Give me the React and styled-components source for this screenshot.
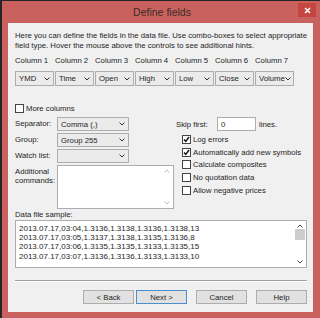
import { createGlobalStyle, styled } from "styled-components";

const GlobalStyle = createGlobalStyle`
  html, body { margin: 0; padding: 0; background: #262626; }
  body {
    width: 320px;
    height: 318px;
    overflow: hidden;
    font-family: "Liberation Sans", Arial, sans-serif;
    color: #1e1e1e;
  }
`;

const Window = styled.div`
  margin: 1px 0 0 2px;
  width: 318px;
  height: 317px;
  box-sizing: border-box;
  background: #c9625e;
  padding-bottom: 6px;
  display: flex;
  flex-direction: column;
`;

const TitleBar = styled.div`
  height: 22px;
  padding: 0 4px 0 6px;
  display: grid;
  grid-template-columns: 1fr auto 1fr;
  align-items: center;
`;

const Title = styled.div`
  grid-column: 2;
  font-size: 10.5px;
  color: #3a2a2a;
`;

const CloseBtn = styled.div`
  grid-column: 3;
  justify-self: end;
  align-self: start;
  margin-top: 2px;
  width: 18px;
  height: 14px;
  background: #c54541;
  display: flex;
  align-items: center;
  justify-content: center;
`;

const Content = styled.div`
  flex: 1;
  margin: 0 7px 0 6px;
  background: #f0f0f0;
  padding: 8px 6px 0 7px;
  display: flex;
  flex-direction: column;
  font-size: 7.75px;
`;

const Intro = styled.div`
  line-height: 10px;
  white-space: nowrap;
`;

const Columns = styled.div`
  margin-top: 5px;
  display: grid;
  grid-template-columns: repeat(7, 39px);
  column-gap: 1px;
  row-gap: 5px;
`;

const Label = styled.div`
  line-height: 10px;
  white-space: nowrap;
`;

const Combo = styled.div`
  box-sizing: border-box;
  width: ${(p) => p.$w || "auto"};
  height: ${(p) => p.$h || "14px"};
  border: 1px solid #adadad;
  background: #ebebeb;
  padding: 0 3px;
  display: flex;
  align-items: center;
  justify-content: space-between;
  white-space: nowrap;
  svg { flex: none; }
`;

const Chevron = () => (
  <svg width="6" height="4" viewBox="0 0 6 4">
    <path d="M0.5 0.5 L3 3 L5.5 0.5" fill="none" stroke="#333" strokeWidth="1" />
  </svg>
);

const CheckRow = styled.div`
  display: flex;
  align-items: center;
  gap: 2px;
  height: ${(p) => p.$h || "10px"};
  white-space: nowrap;
`;

const Box = styled.div`
  box-sizing: border-box;
  width: 9px;
  height: 9px;
  border: 1px solid #444;
  background: #fff;
  display: flex;
  align-items: center;
  justify-content: center;
`;

const Check = ({ checked, label, h }) => (
  <CheckRow $h={h}>
    <Box>
      {checked && (
        <svg width="7" height="7" viewBox="0 0 7 7">
          <path d="M1 3.5 L2.8 5.5 L6 1" fill="none" stroke="#111" strokeWidth="1.4" />
        </svg>
      )}
    </Box>
    {label}
  </CheckRow>
);

const MoreColumns = styled.div`
  margin-top: 17px;
`;

const Form = styled.div`
  margin-top: 4px;
  display: grid;
  grid-template-columns: 161px 1fr;
`;

const LeftForm = styled.div`
  display: grid;
  grid-template-columns: 42px 117px;
  row-gap: 2px;
  align-items: center;
`;

const TwoLineLabel = styled.div`
  align-self: start;
  line-height: 9px;
  margin-top: 2px;
  white-space: nowrap;
`;

const TextArea = styled.div`
  box-sizing: border-box;
  height: 44px;
  border: 1px solid #abadb3;
  background: #fff;
  display: flex;
  justify-content: flex-end;
`;

const ScrollBar = styled.div`
  width: 12px;
  display: flex;
  flex-direction: column;
  align-items: center;
  justify-content: space-between;
  padding: 3px 0;
  box-sizing: border-box;
`;

const Thumb = styled.div`
  width: 10px;
  height: 11px;
  background: #cdcdcd;
  margin-bottom: auto;
  margin-top: 1px;
`;

const Arrow = ({ up, color }) => (
  <svg width="6" height="4" viewBox="0 0 6 4">
    <path
      d={up ? "M0.5 3.5 L3 1 L5.5 3.5" : "M0.5 0.5 L3 3 L5.5 0.5"}
      fill="none"
      stroke={color}
      strokeWidth="1"
    />
  </svg>
);

const RightForm = styled.div`
  display: flex;
  flex-direction: column;
`;

const SkipRow = styled.div`
  display: flex;
  align-items: center;
  height: 14px;
`;

const SkipLabel = styled.div`
  width: 41px;
  flex: none;
`;

const Input = styled.div`
  box-sizing: border-box;
  width: 39px;
  flex: none;
  height: 14px;
  border: 1px solid #abadb3;
  background: #fff;
  padding: 0 3px;
  display: flex;
  align-items: center;
`;

const Lines = styled.div`
  margin-left: 3px;
`;

const CheckList = styled.div`
  margin: 2px 0 0 6px;
  display: flex;
  flex-direction: column;
`;

const SampleLabel = styled(Label)`
  margin-top: 1px;
`;

const Sample = styled.div`
  box-sizing: border-box;
  height: 48px;
  border: 1px solid #abadb3;
  background: #fff;
  display: flex;
`;

const SampleText = styled.div`
  flex: 1;
  padding: 3px 3px;
  font-size: 8px;
  line-height: 9.2px;
  white-space: nowrap;
`;

const Divider = styled.div`
  margin-top: 12px;
  height: 1px;
  background: #a0a0a0;
  border-bottom: 1px solid #fff;
`;

const Buttons = styled.div`
  margin-top: 8px;
  display: flex;
  justify-content: flex-end;
`;

const Button = styled.div`
  box-sizing: border-box;
  width: 51px;
  height: 14px;
  margin-left: ${(p) => p.$gap || "9px"};
  border: 1px solid ${(p) => (p.$default ? "#4b8fd0" : "#adadad")};
  background: #e1e1e1;
  display: flex;
  align-items: center;
  justify-content: center;
`;

const columns = ["YMD", "Time", "Open", "High", "Low", "Close", "Volume"];
const samples = [
  "2013.07.17,03:04,1.3136,1.3138,1.3136,1.3138,13",
  "2013.07.17,03:05,1.3137,1.3138,1.3135,1.3136,8",
  "2013.07.17,03:06,1.3135,1.3135,1.3133,1.3135,15",
  "2013.07.17,03:07,1.3136,1.3136,1.3133,1.3133,10",
];

export default function App() {
  return (
    <>
      <GlobalStyle />
      <Window>
        <TitleBar>
          <Title>Define fields</Title>
          <CloseBtn>
            <svg width="7" height="7" viewBox="0 0 7 7">
              <path d="M1 1 L6 6 M6 1 L1 6" stroke="#fff" strokeWidth="1.5" />
            </svg>
          </CloseBtn>
        </TitleBar>
        <Content>
          <Intro>
            Here you can define the fields in the data file. Use combo-boxes to select appropriate
            <br />
            field type. Hover the mouse above the controls to see additional hints.
          </Intro>
          <Columns>
            {columns.map((c, i) => (
              <Label key={"l" + i}>Column {i + 1}</Label>
            ))}
            {columns.map((c) => (
              <Combo key={c} $h="15px">
                {c}
                <Chevron />
              </Combo>
            ))}
          </Columns>
          <MoreColumns>
            <Check label="More columns" />
          </MoreColumns>
          <Form>
            <LeftForm>
              <Label>Separator:</Label>
              <Combo $w="72px">
                Comma (,)
                <Chevron />
              </Combo>
              <Label>Group:</Label>
              <Combo $w="72px">
                Group 255
                <Chevron />
              </Combo>
              <Label>Watch list:</Label>
              <Combo $w="72px">
                <span />
                <Chevron />
              </Combo>
              <TwoLineLabel>
                Additional
                <br />
                commands:
              </TwoLineLabel>
              <TextArea>
                <ScrollBar>
                  <Arrow up color="#bdbdbd" />
                  <Arrow color="#bdbdbd" />
                </ScrollBar>
              </TextArea>
            </LeftForm>
            <RightForm>
              <SkipRow>
                <SkipLabel>Skip first:</SkipLabel>
                <Input>0</Input>
                <Lines>lines.</Lines>
              </SkipRow>
              <CheckList>
                <Check checked h="12.7px" label="Log errors" />
                <Check checked h="12.7px" label="Automatically add new symbols" />
                <Check h="12.7px" label="Calculate composites" />
                <Check h="12.7px" label="No quotation data" />
                <Check h="12.7px" label="Allow negative prices" />
              </CheckList>
            </RightForm>
          </Form>
          <SampleLabel>Data file sample:</SampleLabel>
          <Sample>
            <SampleText>
              {samples.map((s) => (
                <div key={s}>{s}</div>
              ))}
            </SampleText>
            <ScrollBar>
              <Arrow up color="#444" />
              <Thumb />
              <Arrow color="#444" />
            </ScrollBar>
          </Sample>
          <Divider />
          <Buttons>
            <Button>&lt; Back</Button>
            <Button $default $gap="2px">Next &gt;</Button>
            <Button>Cancel</Button>
            <Button>Help</Button>
          </Buttons>
        </Content>
      </Window>
    </>
  );
}
